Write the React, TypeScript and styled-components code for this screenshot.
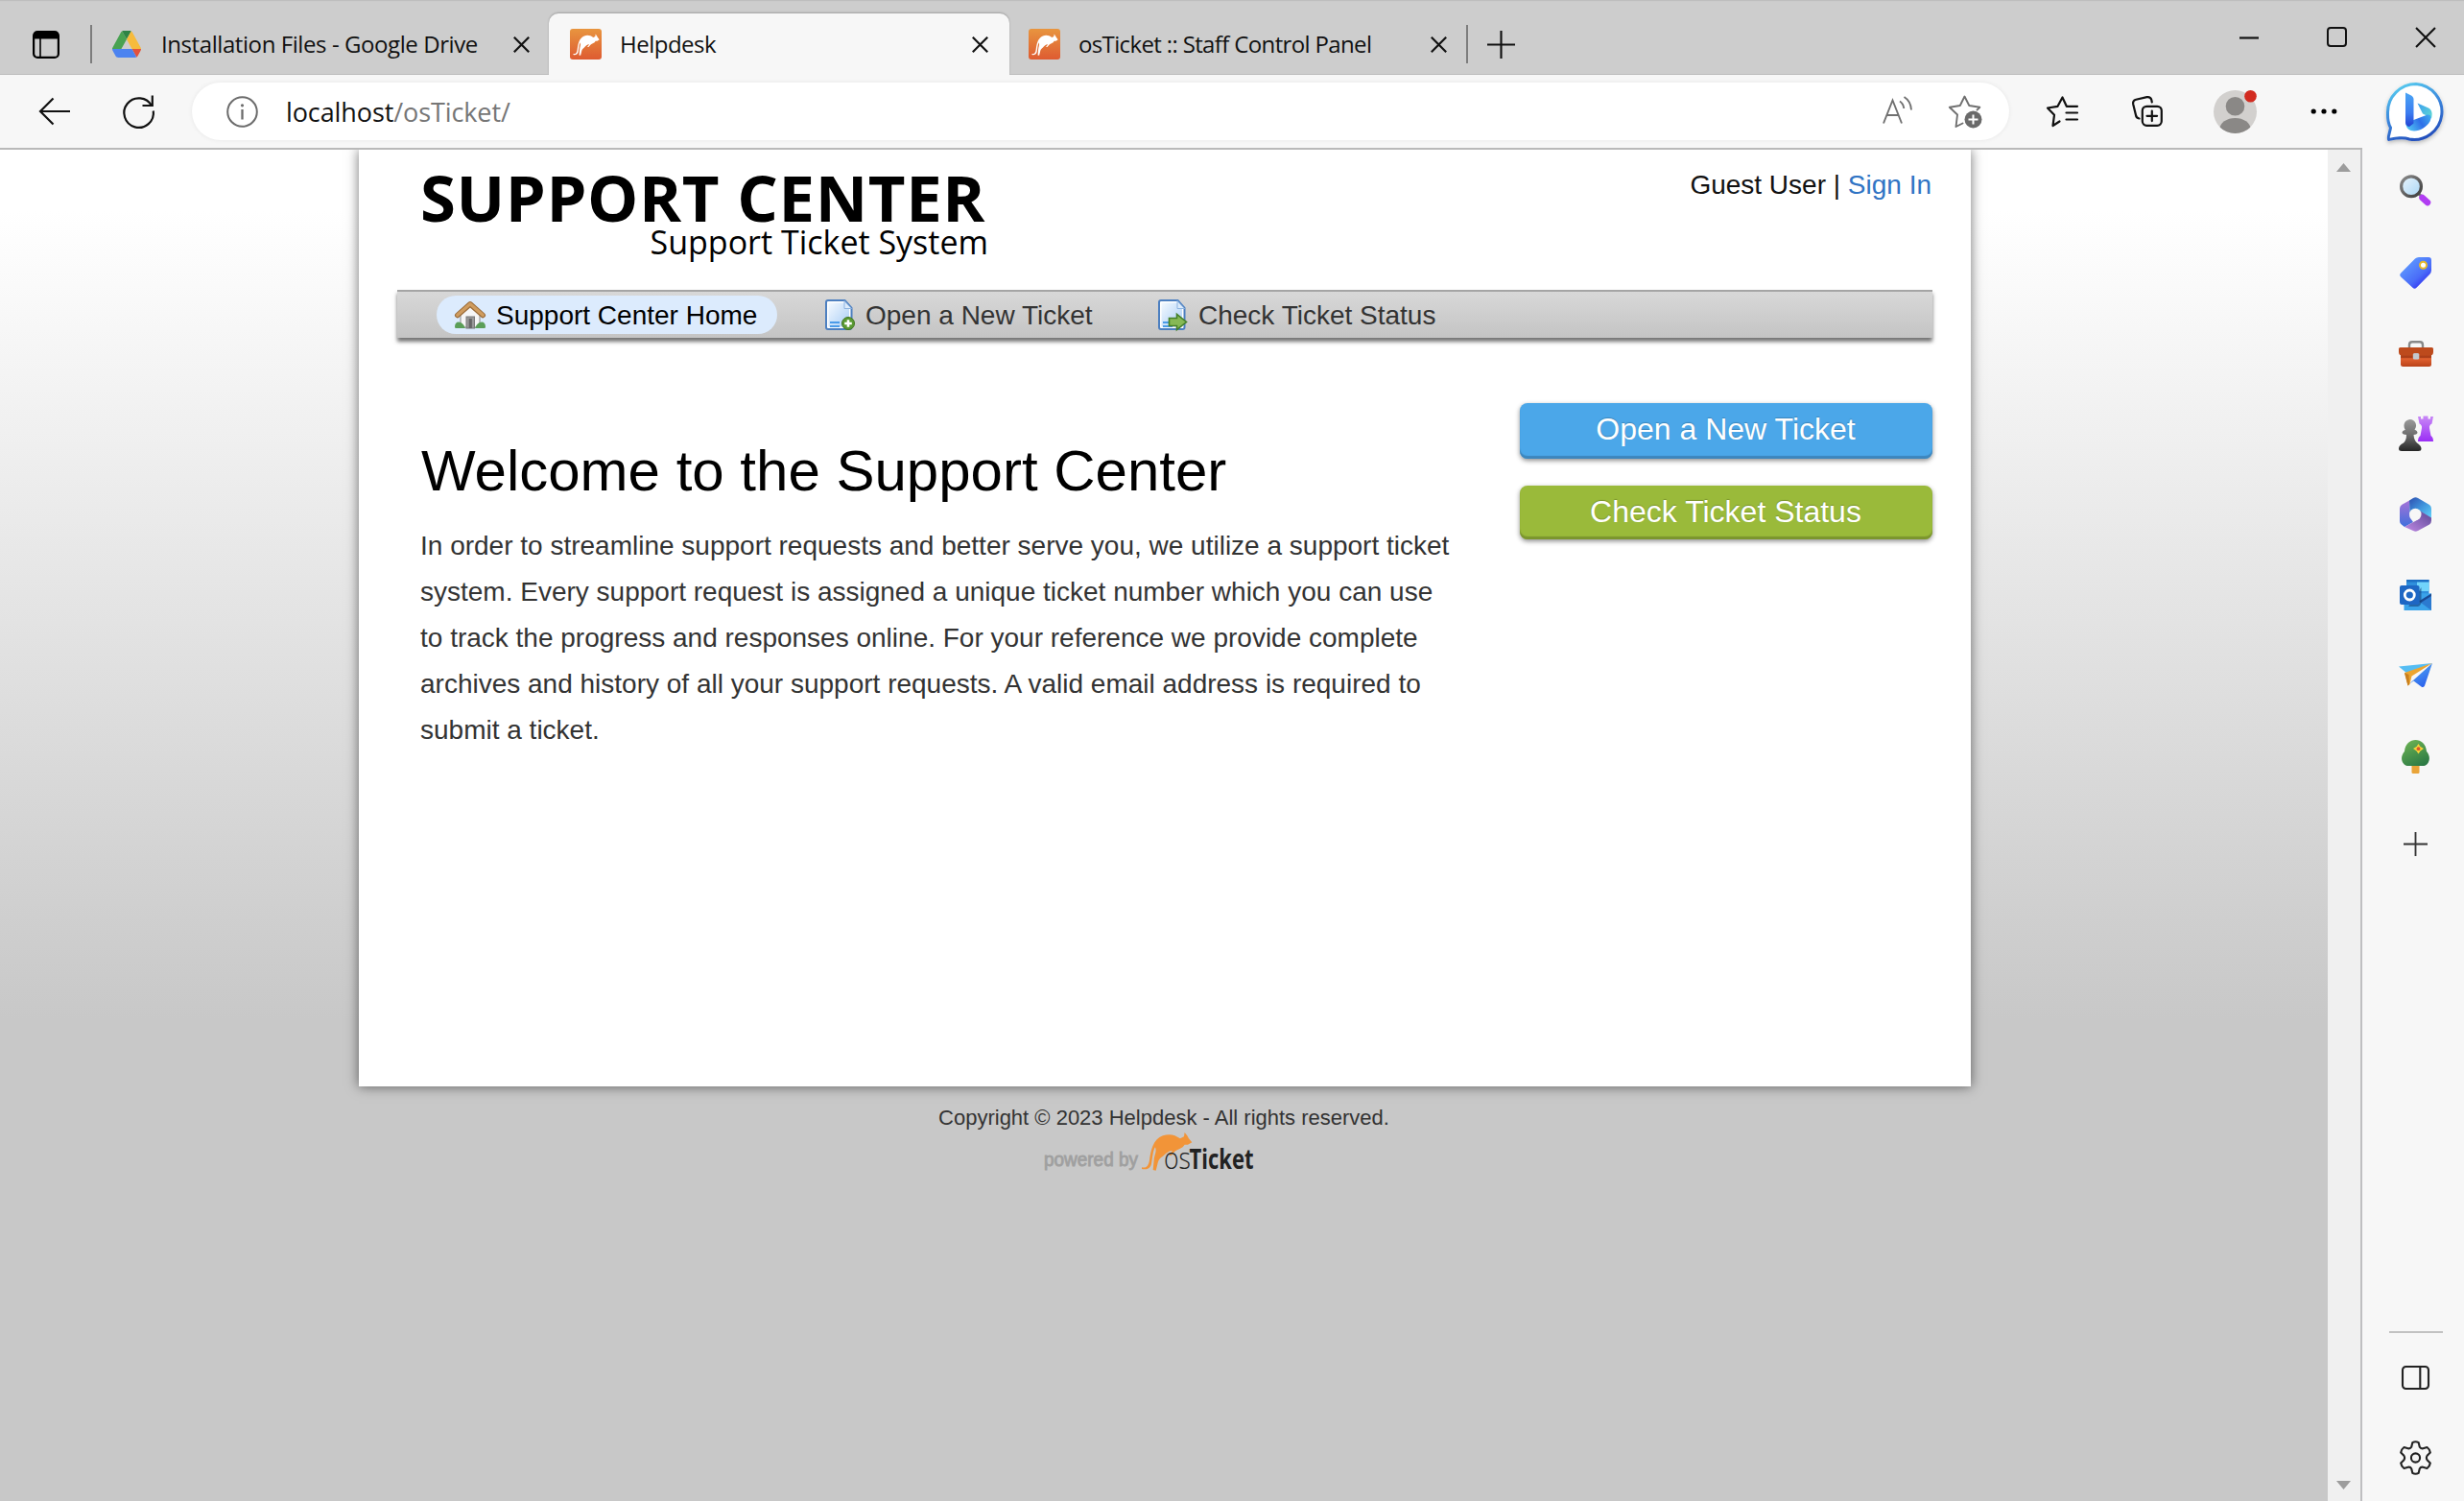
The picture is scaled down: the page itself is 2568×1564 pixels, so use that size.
import React from "react";
import styled, { createGlobalStyle, css } from "styled-components";

const ui = `"Open Sans", "Noto Sans", sans-serif`;
const arial = `"Liberation Sans", Arial, sans-serif`;

const GlobalStyle = createGlobalStyle`
  * { box-sizing: border-box; }
  html, body { margin: 0; padding: 0; }
  body { overflow: hidden; background: #f7f7f7; }
  svg { display: block; flex: none; overflow: visible; }
`;

const Window = styled.div`
  width: 2568px;
  height: 1564px;
  display: flex;
  flex-direction: column;
  background: #f7f7f7;
  font-family: ${ui};
`;

/* ---------- title bar ---------- */

const TitleBar = styled.header`
  height: 78px;
  flex: none;
  display: flex;
  align-items: center;
  padding: 14px 29px 0 34px;
  background: #cdcdcd;
  box-shadow: inset 0 2px 1px -1px #bdbdbd, inset 0 -1px 0 #bcbcbc;
`;

const Divider = styled.span<{ $ml?: number }>`
  width: 2px;
  height: 40px;
  margin-left: ${(p) => p.$ml ?? 0}px;
  background: #7d7d7d;
`;

const TabBox = styled.div<{ $active?: boolean; $width: number; $pad: string; $gap: number }>`
  width: ${(p) => p.$width}px;
  height: 64px;
  padding: ${(p) => p.$pad};
  display: flex;
  align-items: center;
  gap: ${(p) => p.$gap}px;
  ${(p) =>
    p.$active &&
    css`
      background: #f7f7f7;
      border-radius: 10px 10px 0 0;
      box-shadow: 0 -1px 2px rgba(0, 0, 0, 0.22);
    `}
`;

const TabTitle = styled.span<{ $spacing: number }>`
  flex: 1;
  padding-bottom: 1px;
  font-size: 24px;
  line-height: 32px;
  letter-spacing: ${(p) => p.$spacing}px;
  color: #111;
  white-space: nowrap;
`;

const NewTab = styled.div`
  margin-left: 20px;
`;

const WindowControls = styled.div`
  margin-left: auto;
  align-self: flex-start;
  height: 49px;
  display: flex;
  align-items: center;
  gap: 71px;
`;

/* ---------- toolbar ---------- */

const Body = styled.div`
  flex: 1;
  min-height: 0;
  display: flex;
`;

const Main = styled.div`
  width: 2462px;
  display: flex;
  flex-direction: column;
`;

const Toolbar = styled.div`
  height: 78px;
  flex: none;
  display: flex;
  align-items: center;
  padding: 0 26px 0 40px;
  background: #f7f7f7;
  border-bottom: 2px solid #b9b9b9;
`;

const Spacer = styled.span<{ $w: number }>`
  width: ${(p) => p.$w}px;
  flex: none;
`;

const AddressBar = styled.div`
  width: 1894px;
  height: 60px;
  display: flex;
  align-items: center;
  padding: 0 28px 0 36px;
  border-radius: 30px;
  background: #fff;
  box-shadow: 0 0 5px rgba(0, 0, 0, 0.07);
`;

const Url = styled.span`
  flex: 1;
  margin-left: 29px;
  padding-top: 1px;
  font-size: 27px;
  line-height: 36px;
  letter-spacing: -0.1px;
  color: #111;
  white-space: nowrap;
`;

const UrlPath = styled.span`
  color: #767676;
`;

/* ---------- viewport ---------- */

const Viewport = styled.div`
  flex: 1;
  min-height: 0;
  display: flex;
  border-right: 2px solid #bfbfc1;
`;

const Page = styled.div`
  width: 2426px;
  overflow: hidden;
  padding-left: 374px;
  background: linear-gradient(#fff 0, #fff 64px, #c8c8c8 906px);
  font-family: ${arial};
`;

const Scrollbar = styled.div`
  flex: 1;
  display: flex;
  flex-direction: column;
  justify-content: space-between;
  align-items: center;
  padding: 14px 2px 12px 0;
  background: #f0f0f0;
`;

const Card = styled.main`
  width: 1680px;
  height: 976px;
  padding: 0 40px;
  background: #fff;
  box-shadow: 0 0 12px rgba(0, 0, 0, 0.55);
`;

const PageHeader = styled.div`
  height: 146px;
  display: flex;
  justify-content: space-between;
  padding-left: 24px;
`;

const Brand = styled.div`
  width: 592px;
  padding-top: 21px;
  font-family: ${ui};
  color: #000;
  white-space: nowrap;
`;

const BrandName = styled.div`
  font-size: 67px;
  font-weight: 700;
  line-height: 56px;
  letter-spacing: 0.6px;
`;

const BrandTag = styled.div`
  padding-top: 1px;
  font-size: 34px;
  line-height: 36px;
  text-align: right;
`;

const UserLinks = styled.div`
  padding: 21px 1px 0 0;
  font-size: 28px;
  line-height: 32px;
  color: #111;
`;

const Link = styled.a`
  color: #3074c4;
`;

const Nav = styled.nav`
  height: 50px;
  display: flex;
  align-items: center;
  gap: 31px;
  padding-left: 41px;
  border-top: 2px solid #a5a5a5;
  background: linear-gradient(#d8d8d8, #c4c4c4);
  box-shadow: 0 4px 4px rgba(0, 0, 0, 0.55);
`;

const NavItem = styled.div<{ $active?: boolean; $width: number }>`
  width: ${(p) => p.$width}px;
  height: 40px;
  display: flex;
  align-items: center;
  gap: 11px;
  padding-left: 19px;
  border-radius: 20px;
  font-size: 28px;
  color: ${(p) => (p.$active ? "#000" : "#333")};
  background: ${(p) => (p.$active ? "#dcebfd" : "transparent")};
  white-space: nowrap;
`;

const NavLabel = styled.span`
  padding-top: 2px;
`;

const Content = styled.div`
  display: flex;
  justify-content: space-between;
  padding: 68px 0 0 24px;
`;

const Intro = styled.section`
  width: 1080px;
  padding-top: 36px;
`;

const Heading = styled.h1`
  margin: 0 0 19px;
  padding-left: 1px;
  font-size: 60px;
  font-weight: 400;
  line-height: 70px;
  color: #000;
  white-space: nowrap;
`;

const Paragraph = styled.p`
  margin: 0;
  font-size: 28px;
  line-height: 48px;
  color: #333;
`;

const Actions = styled.aside`
  width: 430px;
  display: flex;
  flex-direction: column;
  gap: 28px;
`;

const ActionButton = styled.button<{ $bg: string; $edge: string; $height: number }>`
  height: ${(p) => p.$height}px;
  padding: 0 1px 0 0;
  border: 0;
  border-radius: 8px;
  background: ${(p) => p.$bg};
  box-shadow: inset 0 -3px 1px ${(p) => p.$edge}, 0 2px 5px rgba(0, 0, 0, 0.45);
  font-family: ${arial};
  font-size: 32px;
  line-height: 54px;
  text-align: center;
  color: #fff;
  display: flex;
  justify-content: center;
  text-shadow: 0 -1px 1px rgba(0, 0, 0, 0.2);
`;

const Footer = styled.footer`
  width: 1680px;
  padding-top: 20px;
  display: flex;
  flex-direction: column;
  font-size: 22px;
  line-height: 26px;
  color: #333;
`;

const Copyright = styled.div`
  padding-right: 2px;
  text-align: center;
`;

const Powered = styled.div`
  margin-top: 1px;
  padding-left: 714px;
`;

/* ---------- edge sidebar ---------- */

const Sidebar = styled.aside`
  width: 106px;
  display: flex;
  flex-direction: column;
  align-items: center;
  padding: 8px 0 27px 5px;
`;

const SideIcon = styled.div<{ $gap: number }>`
  margin-top: ${(p) => p.$gap}px;
`;

const SideDivider = styled.div`
  width: 56px;
  height: 2px;
  margin-top: auto;
  background: #c2c2c2;
`;

/* ---------- icons ---------- */

const Close = ({ size = 17, w = 2.2 }: { size?: number; w?: number }) => (
  <svg width={size} height={size} viewBox="0 0 17 17" stroke="#111" strokeWidth={w} fill="none">
    <path d="M.8.8l15.4 15.4M16.2.8L.8 16.2" />
  </svg>
);

const TabActionsIcon = () => (
  <svg width="28" height="29" viewBox="0 0 28 29">
    <rect x="1.1" y="1.1" width="25.8" height="26.8" rx="4" fill="none" stroke="#000" strokeWidth="2.2" />
    <path d="M1 8.500V5a4 4 0 0 1 4-4h18a4 4 0 0 1 4 4v3.500z" fill="#000" />
    <path d="M8 8v20" stroke="#000" strokeWidth="1.600" />
  </svg>
);

const DriveIcon = () => (
  <svg width="30" height="28" viewBox="0 0 87.3 78" preserveAspectRatio="none">
    <path d="M43.650 25L29.900 1.200c-1.350.8-2.500 1.900-3.300 3.300L1.200 48.500A9 9 0 0 0 0 53h27.500z" fill="#48a251" />
    <path d="M43.650 25L57.400 1.200C56 .4 54.500 0 52.900 0H34.400c-1.600 0-3.150.450-4.500 1.200z" fill="#2e8445" />
    <path d="M73.400 26.500L60.700 4.500c-.8-1.400-1.950-2.500-3.300-3.300L43.650 25 59.800 53h27.450c0-1.550-.4-3.100-1.200-4.500z" fill="#f6bb3c" />
    <path d="M73.550 76.800c1.350-.8 2.500-1.900 3.300-3.300l9.250-16c.8-1.400 1.200-2.950 1.200-4.500H59.800z" fill="#e3523d" />
    <path d="M0 53c0 1.550.4 3.100 1.200 4.500l9.250 16c.8 1.400 1.950 2.500 3.300 3.300 1.350.8 2.900 1.200 4.500 1.200h50.800c1.600 0 3.150-.450 4.500-1.200L59.800 53z" fill="#4c83f0" />
  </svg>
);

const roo =
  "M0 109C14 112 21 105 24 86C28 58 34 22 66 10C88 3 104 8 120 19L132 13L134 0L142 10L147 19L157 31L144 38L134 38C128 50 112 52 105 58L92 72L84 72L96 57C84 56 76 66 66 74C53 82 51 90 49 100L44 119L35 117L38 86C39 70 48 60 42 46C34 58 34 78 30 98C26 115 10 117 0 114Z";

const RooIcon = ({ id }: { id: string }) => (
  <svg width="33" height="32" viewBox="0 0 33 32">
    <defs>
      <linearGradient id={id} x1="0" y1="0" x2="0" y2="1">
        <stop offset="0" stopColor="#e8953f" />
        <stop offset="1" stopColor="#de5b31" />
      </linearGradient>
    </defs>
    <rect width="33" height="32" rx="3" fill={`url(#${id})`} />
    <path d={roo} transform="translate(3.500 5.500) scale(.173 .188)" fill="#fff" />
  </svg>
);

const PlusIcon = ({ size, color, w }: { size: number; color: string; w: number }) => (
  <svg width={size} height={size} viewBox="0 0 30 30" stroke={color} strokeWidth={w}>
    <path d="M15 0v30M0 15h30" />
  </svg>
);

const MinimizeIcon = () => (
  <svg width="20" height="20" viewBox="0 0 20 20">
    <path d="M0 10.500h20" stroke="#111" strokeWidth="2.200" />
  </svg>
);

const MaximizeIcon = () => (
  <svg width="21" height="21" viewBox="0 0 21 21">
    <rect x="1" y="1" width="19" height="19" rx="3" fill="none" stroke="#111" strokeWidth="2" />
  </svg>
);

const BackIcon = () => (
  <svg width="33" height="29" viewBox="0 0 33 29" fill="none" stroke="#111" strokeWidth="2.200">
    <path d="M33 14H2M15.500.500L2 14 15.500 27.500" />
  </svg>
);

const ReloadIcon = () => (
  <svg width="33" height="33" viewBox="0 0 33 33" fill="none" stroke="#111" strokeWidth="2.200">
    <path d="M30.200 10.500A15.300 15.300 0 1 0 31.800 15.500M30.800 -0.500V10H20.500" />
  </svg>
);

const InfoIcon = () => (
  <svg width="33" height="33" viewBox="0 0 33 33" fill="none" stroke="#6c6c6c" strokeWidth="2">
    <circle cx="16.500" cy="16.500" r="15.300" />
    <path d="M16.500 14v10.500" strokeWidth="2.300" />
    <circle cx="16.500" cy="9.800" r="1.600" fill="#6c6c6c" stroke="none" />
  </svg>
);

const ReadAloudIcon = () => (
  <svg width="31" height="30" viewBox="0 0 31 30" fill="none" stroke="#707070" strokeWidth="1.900">
    <path d="M1 27.500L10.500 3.500 20 27.500M4.400 19h12.200M18 4.500c2.500 1.800 4 4.500 4.300 7.500M22.500 0c4.500 2.800 7.200 8 7.500 13.500" />
  </svg>
);

const AddFavoriteIcon = () => (
  <svg width="35" height="35" viewBox="0 0 35 35" fill="none">
    <path
      d="M14.500 29.500L7.500 33 9 20.500.8 12.800l11-1.800L16.500 1.500 21.300 11l11 1.800-2.800 2.800"
      stroke="#707070"
      strokeWidth="1.900"
      strokeLinejoin="round"
      strokeLinecap="round"
    />
    <circle cx="25.500" cy="25.500" r="9" fill="#6a6a6a" />
    <path d="M25.500 20.500v10M20.500 25.500h10" stroke="#fff" strokeWidth="2" />
  </svg>
);

const FavoritesIcon = () => (
  <svg width="33" height="32" viewBox="0 0 33 32" fill="none" stroke="#111" strokeWidth="2.200" strokeLinecap="round" strokeLinejoin="round">
    <path d="M13.500 26.500L6.500 31 8 19.800 1 12.500l10.500-1.700L16.500 1.500l4.300 9.300H32M20.500 17.500H32M20.500 24.500H32" />
  </svg>
);

const CollectionsIcon = () => (
  <svg width="32" height="32" viewBox="0 0 32 32" fill="none" stroke="#111" strokeWidth="2.200" strokeLinecap="round">
    <path d="M7.500 23.500C5 23 4.300 22 4 20L1.200 8.500C.7 6 2 4.300 4.200 3.700L15.500 1.200C18 .8 19.500 1.500 20.300 4l.5 2.500" />
    <rect x="10.800" y="10.800" width="20" height="20" rx="4.500" />
    <path d="M20.800 15.500v10.600M15.500 20.800h10.600" />
  </svg>
);

const ProfileIcon = () => (
  <svg width="45" height="45" viewBox="0 0 45 45">
    <defs>
      <clipPath id="avatar">
        <circle cx="22.500" cy="22.500" r="22.500" />
      </clipPath>
    </defs>
    <circle cx="22.500" cy="22.500" r="22.500" fill="#d2d0ce" />
    <circle cx="22.500" cy="16.800" r="9.800" fill="#8a8886" />
    <ellipse cx="22.500" cy="40.500" rx="16" ry="11.500" fill="#8a8886" clipPath="url(#avatar)" />
    <circle cx="38.500" cy="6.300" r="6.300" fill="#d22b20" />
  </svg>
);

const MoreIcon = () => (
  <svg width="28" height="6" viewBox="0 0 28 6">
    <circle cx="3.200" cy="3" r="2.600" />
    <circle cx="14" cy="3" r="2.600" />
    <circle cx="24.800" cy="3" r="2.600" />
  </svg>
);

const BingIcon = () => (
  <svg width="61" height="61" viewBox="0 0 61 61">
    <defs>
      <linearGradient id="bingRing" x1=".2" y1="0" x2=".6" y2="1">
        <stop offset="0" stopColor="#57cdf0" />
        <stop offset=".5" stopColor="#3b86dc" />
        <stop offset="1" stopColor="#2450bd" />
      </linearGradient>
      <linearGradient id="bingStem" x1="0" y1="0" x2="0" y2="1">
        <stop offset="0" stopColor="#4aa5f5" />
        <stop offset=".6" stopColor="#3c7cf0" />
        <stop offset="1" stopColor="#2142d2" />
      </linearGradient>
      <linearGradient id="bingFoot" x1="0" y1=".6" x2="1" y2=".2">
        <stop offset="0" stopColor="#4fc0f3" />
        <stop offset=".55" stopColor="#2f6fe8" />
        <stop offset="1" stopColor="#3fa6ee" />
      </linearGradient>
      <linearGradient id="bingWing" x1="0" y1="0" x2="1" y2="1">
        <stop offset="0" stopColor="#3a9df0" />
        <stop offset="1" stopColor="#62dcd2" />
      </linearGradient>
      <filter id="bingShadow" x="-20%" y="-20%" width="140%" height="150%">
        <feDropShadow dx="0" dy="2" stdDeviation="2" floodOpacity=".25" />
      </filter>
    </defs>
    <path
      d="M31 1.500A29 29 0 1 1 24 59C17 56.500 10 58 2.500 59.500 1 59 4 51 4.500 47 1 41 1.500 36 1.500 31A29.500 29.500 0 0 1 31 1.500Z"
      fill="#fff"
      stroke="url(#bingRing)"
      strokeWidth="3"
      filter="url(#bingShadow)"
    />
    <path d="M32.500 21.500L44 26.500C47.500 28.500 48.500 32 47 37.500L43 35 38 32.500Z" fill="url(#bingWing)" />
    <path d="M20.500 42L43 33.500C46.500 33 47.500 36 45.500 40.500 42 46.500 35 50.500 29 50.500 24 50.500 20 47 20.500 42Z" fill="url(#bingFoot)" />
    <path d="M20 10.500L26 13.500C27.500 14.500 28.500 15.500 28.500 17.500V42.500L24 46C21.500 45.500 20 44 20 41.500Z" fill="url(#bingStem)" />
  </svg>
);

const SearchIcon = () => (
  <svg width="34" height="33" viewBox="0 0 34 33">
    <defs>
      <linearGradient id="lens" x1="0" y1="0" x2="1" y2="1">
        <stop offset="0" stopColor="#eaf6fd" />
        <stop offset="1" stopColor="#a9d5f5" />
      </linearGradient>
      <linearGradient id="rim" x1="0" y1="0" x2="1" y2="1">
        <stop offset="0" stopColor="#8a8a8a" />
        <stop offset="1" stopColor="#3c3c3c" />
      </linearGradient>
    </defs>
    <path d="M19.500 19.500l5 5" stroke="#777" strokeWidth="3" />
    <path d="M23.500 24l5.500 5" stroke="#b13df2" strokeWidth="6.500" strokeLinecap="round" />
    <circle cx="12" cy="12.300" r="10.400" fill="url(#lens)" stroke="url(#rim)" strokeWidth="3.200" />
  </svg>
);

const TagIcon = () => (
  <svg width="33" height="33" viewBox="0 0 33 33">
    <defs>
      <linearGradient id="tag" x1=".1" y1=".2" x2=".8" y2="1">
        <stop offset="0" stopColor="#5f9bff" />
        <stop offset=".6" stopColor="#4a6df8" />
        <stop offset="1" stopColor="#2b22f0" />
      </linearGradient>
    </defs>
    <path d="M16 1.500Q17.500 0 20 0H30Q33 0 33 3V13.500Q33 16 31.300 17.800L17.500 31.800Q15.500 33.500 13.500 31.800L1.200 20.500Q-.8 18.500 1.200 16.500Z" fill="url(#tag)" />
    <circle cx="24.500" cy="8.300" r="3.500" fill="#fff" stroke="#e8b92c" strokeWidth="2" />
  </svg>
);

const ToolboxIcon = () => (
  <svg width="36" height="27" viewBox="0 0 36 27">
    <defs>
      <linearGradient id="box" x1="0" y1="0" x2="0" y2="1">
        <stop offset="0" stopColor="#c24b1c" />
        <stop offset=".35" stopColor="#a83d18" />
        <stop offset=".45" stopColor="#e1612f" />
        <stop offset="1" stopColor="#b9421a" />
      </linearGradient>
    </defs>
    <path d="M11 8V4.500Q11 1.300 14 1.300H22Q25 1.300 25 4.500V8" fill="none" stroke="#888" strokeWidth="2.400" />
    <path d="M2 12H34V24.500Q34 27 31.500 27H4.500Q2 27 2 24.500Z" fill="url(#box)" />
    <path d="M1.500 7H34.500Q36 7 36 8.500V12Q36 15.500 32 15.500H4Q0 15.500 0 12V8.500Q0 7 1.500 7Z" fill="#bd4a1c" />
    <rect x="14.800" y="13" width="6.500" height="6.500" rx="1.500" fill="#c3c9cf" />
  </svg>
);

const GamesIcon = () => (
  <svg width="36" height="37" viewBox="0 0 36 37">
    <defs>
      <linearGradient id="pawn" x1="0" y1="0" x2="0" y2="1">
        <stop offset="0" stopColor="#9a9a9a" />
        <stop offset=".5" stopColor="#6d6d6d" />
        <stop offset="1" stopColor="#262626" />
      </linearGradient>
      <linearGradient id="rook" x1="0" y1="0" x2="0" y2="1">
        <stop offset="0" stopColor="#c98af6" />
        <stop offset="1" stopColor="#9a2ef5" />
      </linearGradient>
    </defs>
    <path d="M20 1H23V3.500H25.500V.5H30.500V3.500H33V1H36L34.500 8.500Q31.500 10 32 13L33.500 21Q36 22.500 36 27H20Q20 22.500 22.500 21L24 13Q24.500 10 21.500 8.500Z" fill="url(#rook)" />
    <path d="M5.500 11A6.300 6.300 0 1 1 16.500 14.500Q19.500 16 19.500 17.500 19.500 19.500 15.500 20 16 26 19 28.500 23.500 31.500 23.500 34.500 23.500 37 20.500 37H3Q0 37 0 34.500 0 31 5 28.500 8 26 8 20 3.500 19.500 3.500 17.500 3.500 16 6.800 14.800 5.500 13 5.500 11Z" fill="url(#pawn)" />
  </svg>
);

const OfficeIcon = () => (
  <svg width="33" height="36" viewBox="0 0 33 36">
    <defs>
      <linearGradient id="ofA" x1="0" y1="0" x2="0" y2="1">
        <stop offset="0" stopColor="#a673d8" />
        <stop offset="1" stopColor="#3f6fdc" />
      </linearGradient>
      <linearGradient id="ofB" x1="0" y1="0" x2="1" y2="1">
        <stop offset="0" stopColor="#2d4fb0" />
        <stop offset=".5" stopColor="#3f93dc" />
        <stop offset="1" stopColor="#63d3fa" />
      </linearGradient>
      <linearGradient id="ofC" x1="0" y1="1" x2="1" y2="0">
        <stop offset="0" stopColor="#c28be6" />
        <stop offset="1" stopColor="#5a4694" />
      </linearGradient>
    </defs>
    <path d="M10 3.500L10.500 21 14 26 5 31 1.800 28.500Q0 27 0 25V12Q0 9.500 2 8Z" fill="url(#ofA)" />
    <path d="M10 3.500L14 1Q16.500-.5 19 1L31 8Q33 9.500 33 12V22L21 14.500Q16 10.500 10.500 18Z" fill="url(#ofB)" />
    <path d="M21.500 14.500L33 21.500V24.500Q33 27 31 28.500L19 35Q16.500 36.500 14 35L5 31 18 24Q22.500 20.500 21.500 14.500Z" fill="url(#ofC)" />
    <circle cx="16.300" cy="18" r="6.200" fill="#f7f7f7" />
  </svg>
);

const OutlookIcon = () => (
  <svg width="33" height="32" viewBox="0 0 33 32">
    <path d="M7 0H30.500V18H7Z" fill="#2f8fdc" />
    <path d="M18 2H30.500V12H18Z" fill="#70d4fb" />
    <path d="M7 0H30.500V2.500H7Z" fill="#1c6fc4" />
    <path d="M4.500 14H20L33 14.500V32H4.500Z" fill="#3aa3ea" />
    <path d="M33 14.500V32L20 22.500Z" fill="#2b7ad0" />
    <path d="M20 22.500L33 14.500V17L22 24Z" fill="#1a4a92" />
    <path d="M9 28L22.500 8V23Q22.500 26.500 19 28Z" fill="#16407a" opacity=".6" />
    <rect y="6" width="20.500" height="20" rx="2" fill="#1e67c4" />
    <circle cx="10.300" cy="16" r="5" fill="none" stroke="#fff" strokeWidth="2.800" />
  </svg>
);

const DropIcon = () => (
  <svg width="35" height="25" viewBox="0 0 35 25">
    <defs>
      <linearGradient id="planeBody" x1="0" y1="0" x2=".6" y2="1">
        <stop offset="0" stopColor="#58b6f5" />
        <stop offset="1" stopColor="#2c62ec" />
      </linearGradient>
    </defs>
    <path d="M0 3.500L35 0 8.500 10.500Z" fill="#55bdf3" />
    <path d="M35 0L27 23.500Q25.500 26 23.500 24.500L15.500 18.500 10.500 22Z" fill="url(#planeBody)" />
    <path d="M35 0L6 10 9.500 23.500 11.500 22 13.500 13.500Z" fill="#eba531" />
    <path d="M6 10L9.500 23.500 11 22 10.500 12Z" fill="#c97f1d" />
  </svg>
);

const TreeIcon = () => (
  <svg width="29" height="35" viewBox="0 0 29 35">
    <defs>
      <linearGradient id="leaf" x1=".2" y1="0" x2=".7" y2="1">
        <stop offset="0" stopColor="#6cb253" />
        <stop offset="1" stopColor="#2c7a45" />
      </linearGradient>
    </defs>
    <path d="M10.500 25H18.500V33.500Q18.500 35 17 35H12Q10.500 35 10.500 33.500Z" fill="#e9a438" />
    <path d="M14.500 0C20 0 25.500 4 26 12 29 15.500 30 20 27.500 24 26 26.500 24 27 21.500 27H7.500C5 27 3 26.500 1.500 24-1 20 0 15.500 3 12 3.500 4 9 0 14.500 0Z" fill="url(#leaf)" />
    <path d="M17.500 4L19.500 7 23 9 19.500 11.500 17.500 14.500 15.500 11.500 12 9 15.500 7Z" fill="#f8d43a" />
    <circle cx="17.500" cy="9.200" r="1.900" fill="#d9562c" />
  </svg>
);

const PanelIcon = () => (
  <svg width="29" height="25" viewBox="0 0 29 25" fill="none" stroke="#222" strokeWidth="2.100">
    <rect x="1" y="1" width="27" height="23" rx="3.500" />
    <path d="M19.300 1v23" />
  </svg>
);

const GearIcon = () => (
  <svg width="33" height="36" viewBox="0 0 33 36" fill="none" stroke="#222" strokeWidth="2.100" strokeLinejoin="round">
    <path d="M13.300 2.200Q16.500.3 19.700 2.200L20.800 6.800Q22 8.800 24.300 8.300L28.500 7Q31.300 9 31.800 12.500L28.600 15.800Q27.200 18 28.600 20.200L31.800 23.500Q31.300 27 28.500 29L24.300 27.700Q22 27.200 20.800 29.200L19.700 33.800Q16.500 35.700 13.300 33.800L12.200 29.200Q11 27.200 8.700 27.700L4.500 29Q1.700 27 1.200 23.500L4.400 20.200Q5.800 18 4.400 15.800L1.200 12.500Q1.700 9 4.500 7L8.700 8.300Q11 8.800 12.200 6.800Z" />
    <circle cx="16.500" cy="18" r="4.600" />
  </svg>
);

const HomeIcon = () => (
  <svg width="32" height="29" viewBox="0 0 32 29">
    <path d="M6 13L16 4 26 13V27H6Z" fill="#f6f6f6" stroke="#9a9a9a" strokeWidth="1.200" />
    <rect x="12" y="16" width="8.500" height="12" fill="#999" stroke="#777" />
    <rect x="14.700" y="18" width="3.200" height="10" fill="#666" />
    <path d="M0 27Q0 21.500 4 21.500 8.500 21.500 11 28H1.500Q0 28 0 27ZM32 27Q32 21.500 28 21.500 23.500 21.500 21 28H30.500Q32 28 32 27Z" fill="#5b9e58" />
    <path d="M2.800 14.500L16 2.800 29.200 14.500" fill="none" stroke="#9a6b38" strokeWidth="5.600" strokeLinecap="round" strokeLinejoin="round" />
    <path d="M2.800 14.300L16 2.800 29.200 14.300" fill="none" stroke="#cf9c5f" strokeWidth="3.400" strokeLinecap="round" strokeLinejoin="round" />
  </svg>
);

const DocIcon = ({ kind }: { kind: "new" | "go" }) => (
  <svg width="31" height="32" viewBox="0 0 31 32">
    <defs>
      <linearGradient id={`doc-${kind}`} x1="0" y1="0" x2="1" y2="1">
        <stop offset="0" stopColor="#f3f9ff" />
        <stop offset="1" stopColor="#a9cdf5" />
      </linearGradient>
    </defs>
    <path d="M3 1H20.500L27.500 9V29Q27.500 31 25.500 31H3Q1 31 1 29V3Q1 1 3 1Z" fill="#fff" stroke="#4c7fc0" strokeWidth="2" />
    <path d="M3.500 3.500H19L25 10V28.500H3.500Z" fill={`url(#doc-${kind})`} />
    <path d="M20 1.500V9.500H27.500Z" fill="#dcebfb" stroke="#8db3e0" strokeWidth="1" />
    <path d="M5 24H15M5 28H15" stroke="#4b9be8" strokeWidth="2" />
    {kind === "new" ? (
      <>
        <circle cx="24" cy="25" r="6.500" fill="#5a9a32" stroke="#41761f" />
        <path d="M24 21.200v7.600M20.200 25h7.600" stroke="#fff" strokeWidth="2.600" />
      </>
    ) : (
      <path d="M11.500 19.500H19.500V15.500L29.500 23.500 19.500 31.500V27.500H11.500Z" fill="#86b955" stroke="#44802a" strokeWidth="1.600" />
    )}
  </svg>
);

const PoweredLogo = () => (
  <svg width="220" height="44" viewBox="0 0 220 44">
    <text x="0" y="36" fontFamily={arial} fontSize="21" fontWeight="400" fill="#a0a0a0" stroke="#a0a0a0" strokeWidth=".9" textLength="98" lengthAdjust="spacingAndGlyphs">
      powered by
    </text>
    <path d={roo} transform="translate(102 1) scale(.333)" fill="#f29438" />
    <text x="125" y="39" fontFamily={ui} fontSize="31" fontWeight="300" fill="#222" textLength="28" lengthAdjust="spacingAndGlyphs">
      os
    </text>
    <text x="151.500" y="39" fontFamily={ui} fontSize="28" fontWeight="700" fill="#222" textLength="67" lengthAdjust="spacingAndGlyphs">
      Ticket
    </text>
  </svg>
);

const Arrow = ({ down }: { down?: boolean }) => (
  <svg width="15" height="9" viewBox="0 0 15 9">
    <path d={down ? "M0 0H15L7.500 9Z" : "M0 9H15L7.500 0Z"} fill="#9c9c9c" />
  </svg>
);

/* ---------- app ---------- */

export default function App() {
  return (
    <Window>
      <GlobalStyle />
      <TitleBar>
        <TabActionsIcon />
        <Divider $ml={32} />
        <TabBox $width={476} $pad="0 20px 0 21px" $gap={21}>
          <DriveIcon />
          <TabTitle $spacing={-0.42}>Installation Files - Google Drive</TabTitle>
          <Close />
        </TabBox>
        <TabBox $active $width={480} $pad="0 22px" $gap={19}>
          <RooIcon id="roo1" />
          <TabTitle $spacing={-0.5}>Helpdesk</TabTitle>
          <Close />
        </TabBox>
        <TabBox $width={476} $pad="0 20px" $gap={19}>
          <RooIcon id="roo2" />
          <TabTitle $spacing={-0.64}>osTicket :: Staff Control Panel</TabTitle>
          <Close />
        </TabBox>
        <Divider />
        <NewTab>
          <PlusIcon size={29} color="#111" w={2.2} />
        </NewTab>
        <WindowControls>
          <MinimizeIcon />
          <MaximizeIcon />
          <Close size={22} w={1.6} />
        </WindowControls>
      </TitleBar>

      <Body>
        <Main>
          <Toolbar>
            <BackIcon />
            <Spacer $w={55} />
            <ReloadIcon />
            <Spacer $w={39} />
            <AddressBar>
              <InfoIcon />
              <Url>
                localhost<UrlPath>/osTicket/</UrlPath>
              </Url>
              <ReadAloudIcon />
              <Spacer $w={38} />
              <AddFavoriteIcon />
            </AddressBar>
            <Spacer $w={39} />
            <FavoritesIcon />
            <Spacer $w={56} />
            <CollectionsIcon />
            <Spacer $w={53} />
            <ProfileIcon />
            <Spacer $w={56} />
            <MoreIcon />
          </Toolbar>
          <Viewport>
            <Page>
              <Card>
                <PageHeader>
                  <Brand>
                    <BrandName>SUPPORT CENTER</BrandName>
                    <BrandTag>Support Ticket System</BrandTag>
                  </Brand>
                  <UserLinks>
                    Guest User | <Link>Sign In</Link>
                  </UserLinks>
                </PageHeader>
                <Nav>
                  <NavItem $active $width={355}>
                    <HomeIcon />
                    <NavLabel>Support Center Home</NavLabel>
                  </NavItem>
                  <NavItem $width={316}>
                    <DocIcon kind="new" />
                    <NavLabel>Open a New Ticket</NavLabel>
                  </NavItem>
                  <NavItem $width={330}>
                    <DocIcon kind="go" />
                    <NavLabel>Check Ticket Status</NavLabel>
                  </NavItem>
                </Nav>
                <Content>
                  <Intro>
                    <Heading>Welcome to the Support Center</Heading>
                    <Paragraph>
                      In order to streamline support requests and better serve you, we utilize a support ticket
                      system. Every support request is assigned a unique ticket number which you can use to track
                      the progress and responses online. For your reference we provide complete archives and
                      history of all your support requests. A valid email address is required to submit a ticket.
                    </Paragraph>
                  </Intro>
                  <Actions>
                    <ActionButton $bg="#4ba7e9" $edge="#3d86bd" $height={58}>
                      Open a New Ticket
                    </ActionButton>
                    <ActionButton $bg="#9aba3a" $edge="#7b952e" $height={56}>
                      Check Ticket Status
                    </ActionButton>
                  </Actions>
                </Content>
              </Card>
              <Footer>
                <Copyright>Copyright © 2023 Helpdesk - All rights reserved.</Copyright>
                <Powered>
                  <PoweredLogo />
                </Powered>
              </Footer>
            </Page>
            <Scrollbar>
              <Arrow />
              <Arrow down />
            </Scrollbar>
          </Viewport>
        </Main>
        <Sidebar>
          <BingIcon />
          <SideIcon $gap={35}><SearchIcon /></SideIcon>
          <SideIcon $gap={53}><TagIcon /></SideIcon>
          <SideIcon $gap={54}><ToolboxIcon /></SideIcon>
          <SideIcon $gap={51}><GamesIcon /></SideIcon>
          <SideIcon $gap={48}><OfficeIcon /></SideIcon>
          <SideIcon $gap={50}><OutlookIcon /></SideIcon>
          <SideIcon $gap={55}><DropIcon /></SideIcon>
          <SideIcon $gap={55}><TreeIcon /></SideIcon>
          <SideIcon $gap={61}><PlusIcon size={25} color="#333" w={2.2} /></SideIcon>
          <SideDivider />
          <SideIcon $gap={34}><PanelIcon /></SideIcon>
          <SideIcon $gap={53}><GearIcon /></SideIcon>
        </Sidebar>
      </Body>
    </Window>
  );
}
